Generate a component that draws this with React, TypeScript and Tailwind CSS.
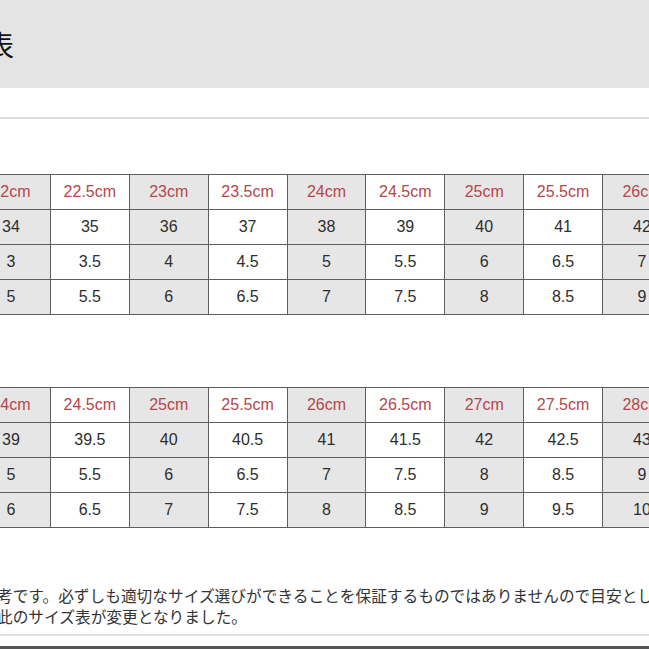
const FONT = { fontFamily: '"Noto Sans CJK JP", "Noto Sans", sans-serif' }
const LATIN = { fontFamily: '"Liberation Sans", "Noto Sans CJK JP", sans-serif' }

type Table = { sizes: string[]; rows: string[][] }

const TABLES: Table[] = [
  {
    sizes: ['22cm', '22.5cm', '23cm', '23.5cm', '24cm', '24.5cm', '25cm', '25.5cm', '26cm'],
    rows: [
      ['34', '35', '36', '37', '38', '39', '40', '41', '42'],
      ['3', '3.5', '4', '4.5', '5', '5.5', '6', '6.5', '7'],
      ['5', '5.5', '6', '6.5', '7', '7.5', '8', '8.5', '9'],
    ],
  },
  {
    sizes: ['24cm', '24.5cm', '25cm', '25.5cm', '26cm', '26.5cm', '27cm', '27.5cm', '28cm'],
    rows: [
      ['39', '39.5', '40', '40.5', '41', '41.5', '42', '42.5', '43'],
      ['5', '5.5', '6', '6.5', '7', '7.5', '8', '8.5', '9'],
      ['6', '6.5', '7', '7.5', '8', '8.5', '9', '9.5', '10'],
    ],
  },
]

function SizeTable({ table }: { table: Table }) {
  return (
    <table className="ml-[-29px] w-[711px] table-fixed border-collapse text-[16px]" style={LATIN}>
      <tbody>
        <tr className="h-[35px]">
          {table.sizes.map((s, i) => (
            <td
              key={s}
              className={`border-[1.5px] border-[#5e5e5e] p-0 text-center text-[#b5474b] ${i % 2 === 0 ? 'bg-[#e6e6e6]' : 'bg-white'}`}
            >
              {s}
            </td>
          ))}
        </tr>
        {table.rows.map((row, r) => (
          <tr key={r} className="h-[35px]">
            {row.map((v, i) => (
              <td
                key={i}
                className={`border-[1.5px] border-[#5e5e5e] p-0 text-center text-[#2e2e2e] ${i % 2 === 0 ? 'bg-[#e6e6e6]' : 'bg-white'}`}
              >
                {v}
              </td>
            ))}
          </tr>
        ))}
      </tbody>
    </table>
  )
}

export default function App() {
  return (
    <div className="w-[649px] h-[649px] overflow-hidden bg-white" style={FONT}>
      {/* title bar */}
      <div className="h-[88px] bg-[#e4e4e4] flex items-center">
        <span className="ml-[-14px] text-[28px] leading-none text-[#111]">表</span>
      </div>
      <div className="h-[29px]" />
      <div className="h-[2px] bg-[#dedede]" />

      <div className="pt-[55px]">
        <SizeTable table={TABLES[0]} />
      </div>
      <div className="pt-[72px]">
        <SizeTable table={TABLES[1]} />
      </div>

      <div className="pt-[57px] text-[15.7px] leading-[21px] text-[#333] whitespace-nowrap">
        <p className="ml-[-3px]">考です。必ずしも適切なサイズ選びができることを保証するものではありませんので目安として</p>
        <p className="ml-[-3px]">此のサイズ表が変更となりました。</p>
      </div>
      <div className="mt-[7px] h-[2px] bg-[#e0e0e0]" />
      <div className="mt-[10px] h-[3px] bg-[#555]" />
    </div>
  )
}
